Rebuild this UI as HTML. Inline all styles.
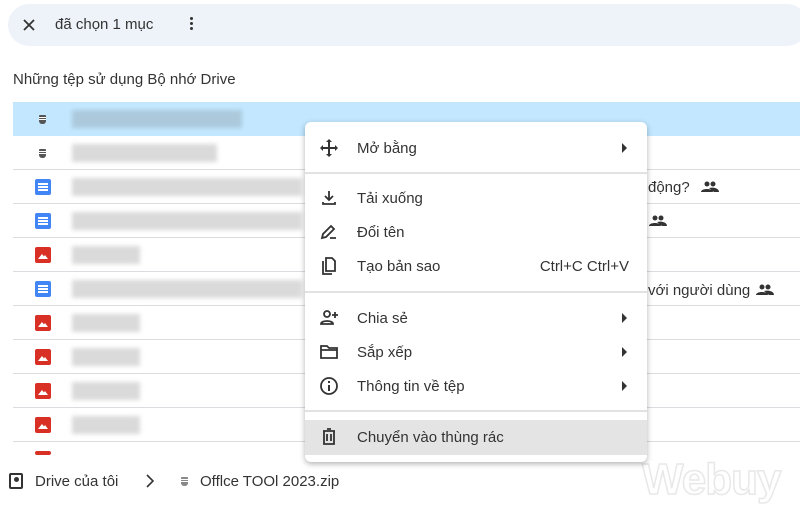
<!DOCTYPE html>
<html><head><meta charset="utf-8"><style>
*{margin:0;padding:0;box-sizing:border-box}
body{width:800px;height:510px;overflow:hidden;background:#fff;font-family:"Liberation Sans",sans-serif;color:#1f1f1f;position:relative}
.abs{position:absolute}
.top{left:8px;top:4px;width:800px;height:42px;background:#eef2f9;border-radius:21px}
.row{position:absolute;left:13px;width:787px;height:34px;border-bottom:1px solid #dadce0}
.blur{position:absolute;height:18px;background:#d6d6d6;filter:blur(2px);opacity:.9}
.doc{position:absolute;left:35px;width:16px;height:16px;background:#4285f4;border-radius:2px}
.doc:before{content:"";position:absolute;left:3px;top:4px;width:10px;height:2px;background:#fff;box-shadow:0 3px #fff,0 6px #fff}
.img{position:absolute;left:35px;width:16px;height:16px;background:#d93025;border-radius:2px}
.img:before{content:"";position:absolute;left:3px;top:7px;border-left:4px solid transparent;border-right:4px solid transparent;border-bottom:5px solid #fff}
.img:after{content:"";position:absolute;left:7px;top:8px;border-left:3px solid transparent;border-right:3px solid transparent;border-bottom:4px solid #fff}
.zip{position:absolute;left:39px;width:7px;height:9px;background:#555;border-radius:1px 1px 3px 3px}
.zip:before{content:"";position:absolute;left:0;top:2px;width:7px;height:1px;background:#fff;box-shadow:0 2px #fff}
.menu{left:305px;top:122px;width:342px;height:340px;background:#fff;border-radius:6px;box-shadow:0 2px 6px rgba(0,0,0,.3)}
.it{position:absolute;left:0;width:342px;height:34px;font-size:15px;color:#333}
.it span.t{position:absolute;left:52px;top:9px}
.it svg{position:absolute;left:14px;top:7px}
.arr{position:absolute;right:20px;top:12px;border-top:5px solid transparent;border-bottom:5px solid transparent;border-left:5px solid #333}
.div{position:absolute;left:0;width:342px;height:2px;background:#e2e2e2}
</style></head><body>
<div class="abs top"></div>
<svg class="abs" style="left:21px;top:17px" width="16" height="16" viewBox="0 0 16 16"><path d="M3 3L13 13M13 3L3 13" stroke="#333" stroke-width="1.8"/></svg>
<div class="abs" style="left:55px;top:16px;font-size:15px;color:#333">đã chọn 1 mục</div>
<div class="abs" style="left:190px;top:17px;width:3px;height:3px;background:#333;border-radius:50%;box-shadow:0 5px #333,0 10px #333"></div>
<div class="abs" style="left:13px;top:71px;font-size:15px;color:#333">Những tệp sử dụng Bộ nhớ Drive</div>

<div class="row" style="top:102px;background:#c2e7ff;border-bottom:none"></div>
<div class="row" style="top:136px"></div>
<div class="row" style="top:170px"></div>
<div class="row" style="top:204px"></div>
<div class="row" style="top:238px"></div>
<div class="row" style="top:272px"></div>
<div class="row" style="top:306px"></div>
<div class="row" style="top:340px"></div>
<div class="row" style="top:374px"></div>
<div class="row" style="top:408px"></div>
<div class="row" style="top:442px;border:none"></div>

<div class="zip" style="top:115px"></div>
<div class="zip" style="top:149px"></div>
<div class="doc" style="top:179px"></div>
<div class="doc" style="top:213px"></div>
<div class="img" style="top:247px"></div>
<div class="doc" style="top:281px"></div>
<div class="img" style="top:315px"></div>
<div class="img" style="top:349px"></div>
<div class="img" style="top:383px"></div>
<div class="img" style="top:417px"></div>
<div class="img" style="top:451px;height:4px"></div>

<div class="blur" style="left:72px;top:110px;width:170px;background:#aac6d9"></div>
<div class="blur" style="left:72px;top:144px;width:145px"></div>
<div class="blur" style="left:72px;top:178px;width:230px"></div>
<div class="blur" style="left:72px;top:212px;width:230px"></div>
<div class="blur" style="left:72px;top:246px;width:68px"></div>
<div class="blur" style="left:72px;top:280px;width:230px"></div>
<div class="blur" style="left:72px;top:314px;width:68px"></div>
<div class="blur" style="left:72px;top:348px;width:68px"></div>
<div class="blur" style="left:72px;top:382px;width:68px"></div>
<div class="blur" style="left:72px;top:416px;width:68px"></div>

<div class="abs" style="left:648px;top:179px;font-size:15px;color:#333">động?</div>
<svg class="abs" style="left:701px;top:181px" width="18" height="12" viewBox="0 0 18 12"><circle cx="6" cy="3" r="2.5" fill="#333"/><circle cx="12" cy="3" r="2.5" fill="#333"/><path d="M0 11C0 7 12 7 12 11ZM8 7C12 6 18 7 18 11H13Z" fill="#333"/></svg>
<svg class="abs" style="left:649px;top:215px" width="18" height="12" viewBox="0 0 18 12"><circle cx="6" cy="3" r="2.5" fill="#333"/><circle cx="12" cy="3" r="2.5" fill="#333"/><path d="M0 11C0 7 12 7 12 11ZM8 7C12 6 18 7 18 11H13Z" fill="#333"/></svg>
<div class="abs" style="left:648px;top:282px;font-size:15px;color:#333">với người dùng</div>
<svg class="abs" style="left:756px;top:284px" width="18" height="12" viewBox="0 0 18 12"><circle cx="6" cy="3" r="2.5" fill="#333"/><circle cx="12" cy="3" r="2.5" fill="#333"/><path d="M0 11C0 7 12 7 12 11ZM8 7C12 6 18 7 18 11H13Z" fill="#333"/></svg>

<div class="abs" style="left:0;top:455px;width:800px;height:55px;background:#fff"></div>
<div class="abs" style="left:9px;top:473px;width:14px;height:16px;border:2px solid #333;border-radius:2px"></div>
<div class="abs" style="left:14px;top:477px;width:5px;height:5px;background:#333;border-radius:50%"></div>
<div class="abs" style="left:35px;top:473px;font-size:15px;color:#333">Drive của tôi</div>
<svg class="abs" style="left:145px;top:473px" width="10" height="16"><path d="M2 2L8 8L2 14" stroke="#333" stroke-width="1.6" fill="none"/></svg>
<div class="zip" style="left:181px;top:477px;background:#888"></div>
<div class="abs" style="left:200px;top:473px;font-size:15px;color:#333">Offlce TOOl 2023.zip</div>
<div class="abs" style="left:642px;top:455px;font-size:44px;font-weight:bold;color:transparent;-webkit-text-stroke:1.5px #e8e8e8;letter-spacing:-1px">Webuy</div>

<div class="abs menu">
 <div class="it" style="top:9px"><svg width="20" height="20" viewBox="0 0 20 20"><path d="M10 1L13 4H7ZM10 19L13 16H7ZM1 10L4 7V13ZM19 10L16 7V13Z" fill="#333"/><path d="M10 4V16M4 10H16" stroke="#333" stroke-width="2"/></svg><span class="t">Mở bằng</span><i class="arr"></i></div>
 <div class="div" style="top:50px"></div>
 <div class="it" style="top:59px"><svg width="20" height="20" viewBox="0 0 20 20"><path d="M10 3V12M6 8L10 12L14 8M4 14V16H16V14" stroke="#333" stroke-width="1.8" fill="none"/></svg><span class="t">Tải xuống</span></div>
 <div class="it" style="top:93px"><svg width="20" height="20" viewBox="0 0 20 20"><path d="M3 16L4 12L12 4L15 7L7 15ZM11 16H17" stroke="#333" stroke-width="1.8" fill="none"/></svg><span class="t">Đổi tên</span></div>
 <div class="it" style="top:127px"><svg width="20" height="20" viewBox="0 0 20 20"><path d="M7 2H13L16 5V15H7ZM4 5V18H13" stroke="#333" stroke-width="1.8" fill="none"/></svg><span class="t">Tạo bản sao</span><span style="position:absolute;right:18px;top:9px">Ctrl+C Ctrl+V</span></div>
 <div class="div" style="top:169px"></div>
 <div class="it" style="top:179px"><svg width="20" height="20" viewBox="0 0 20 20"><circle cx="8" cy="6" r="3" stroke="#333" stroke-width="1.8" fill="none"/><path d="M2 16C2 12 14 12 14 16ZM16 4V10M13 7H19" stroke="#333" stroke-width="1.8" fill="none"/></svg><span class="t">Chia sẻ</span><i class="arr"></i></div>
 <div class="it" style="top:213px"><svg width="20" height="20" viewBox="0 0 20 20"><path d="M2 4H8L10 6H18V16H2ZM2 8H18" stroke="#333" stroke-width="1.8" fill="none"/></svg><span class="t">Sắp xếp</span><i class="arr"></i></div>
 <div class="it" style="top:247px"><svg width="20" height="20" viewBox="0 0 20 20"><circle cx="10" cy="10" r="8" stroke="#333" stroke-width="1.8" fill="none"/><path d="M10 9V15M10 5V7" stroke="#333" stroke-width="2"/></svg><span class="t">Thông tin về tệp</span><i class="arr"></i></div>
 <div class="div" style="top:288px"></div>
 <div class="it" style="top:298px;height:35px;background:#e4e4e4"><svg width="20" height="20" viewBox="0 0 20 20"><path d="M4 4H16M5 4V17H15V4M8 7V14M12 7V14M8 2H12" stroke="#333" stroke-width="1.8" fill="none"/></svg><span class="t">Chuyển vào thùng rác</span></div>
</div>
</body></html>
